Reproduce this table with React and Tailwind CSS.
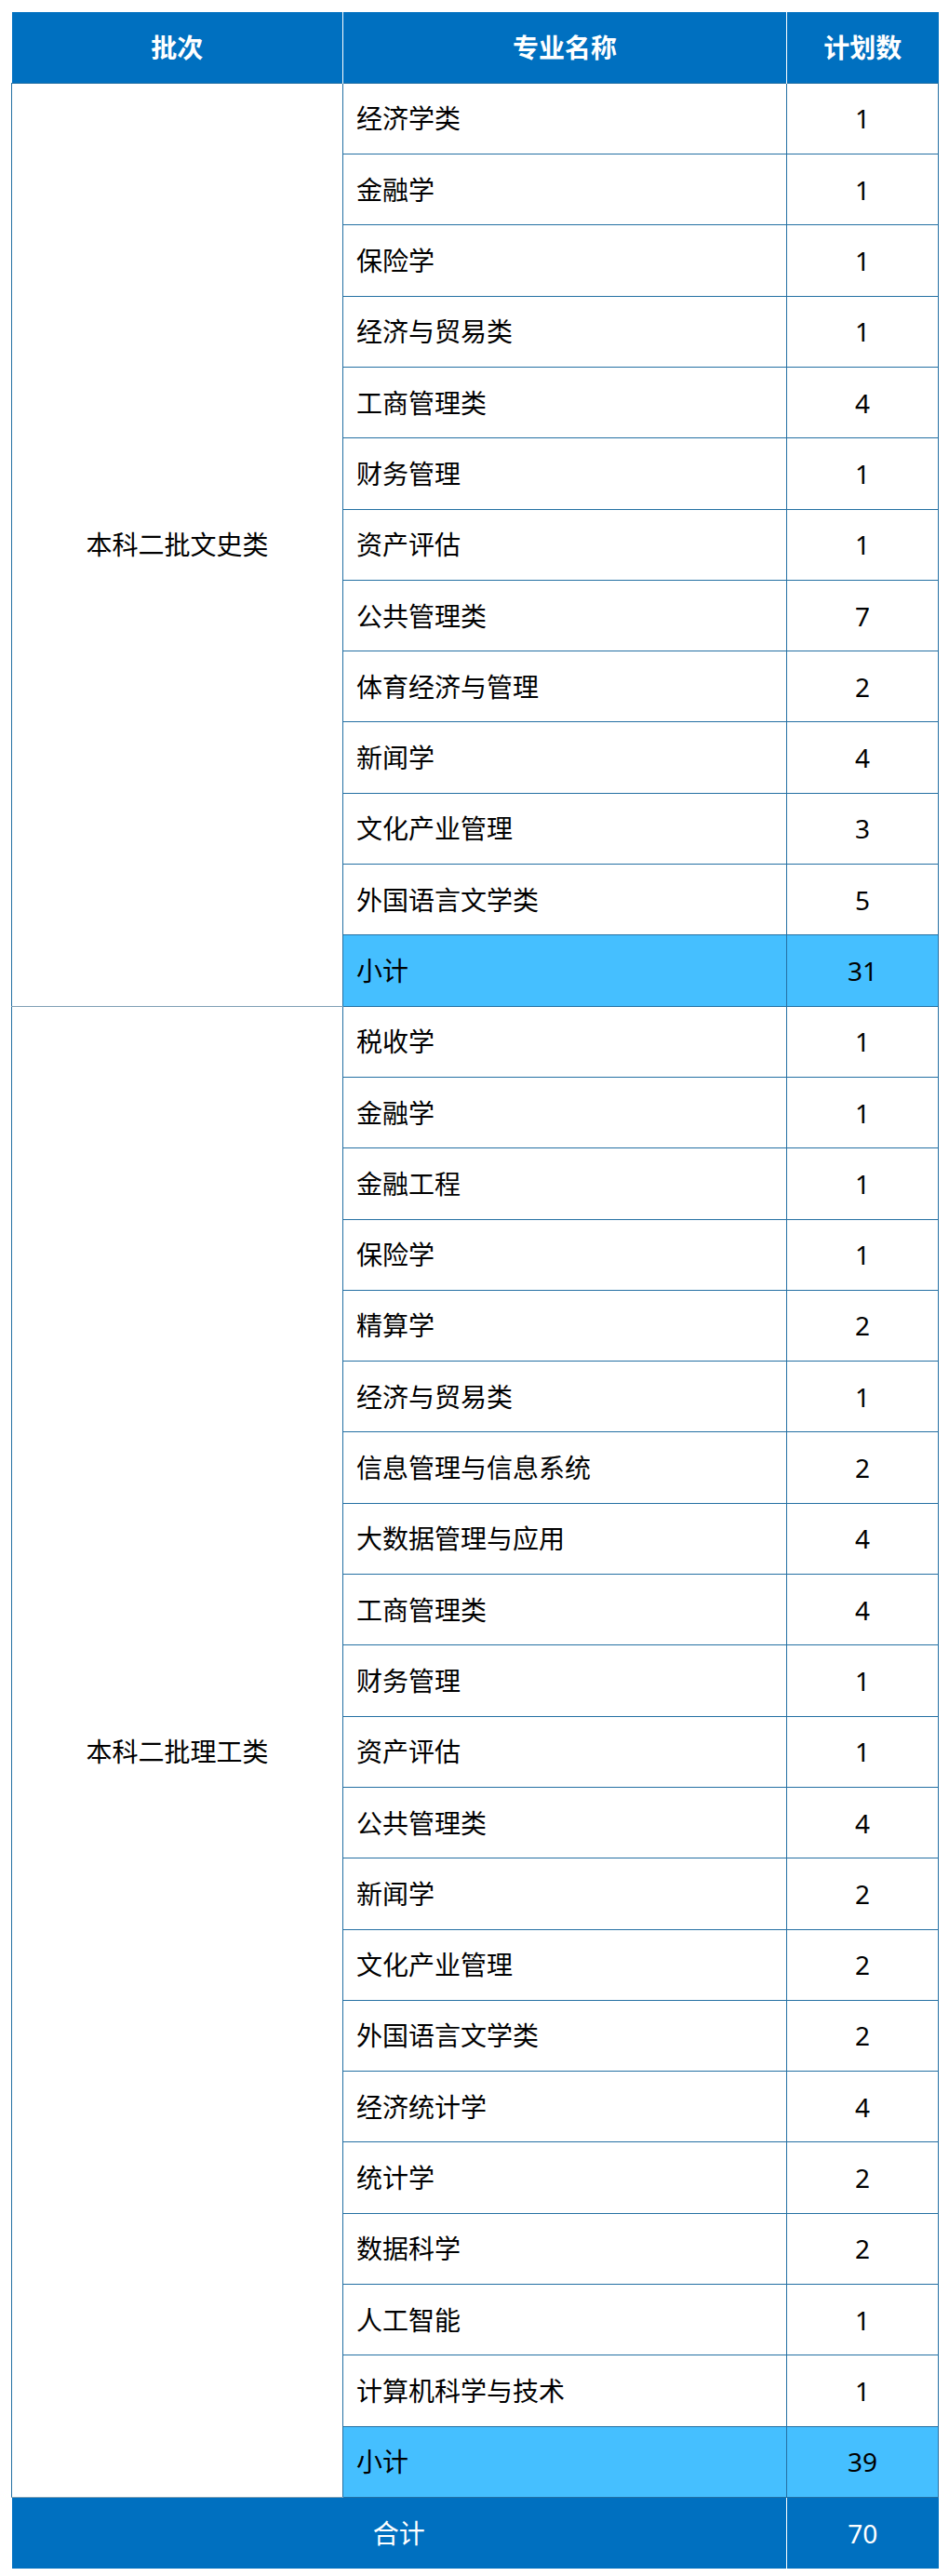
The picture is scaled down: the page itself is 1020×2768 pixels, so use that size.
import React from 'react';

const groups = [
    {
        name: '本科二批文史类',
        total: 31,
        items: [
            ['经济学类', 1],
            ['金融学', 1],
            ['保险学', 1],
            ['经济与贸易类', 1],
            ['工商管理类', 4],
            ['财务管理', 1],
            ['资产评估', 1],
            ['公共管理类', 7],
            ['体育经济与管理', 2],
            ['新闻学', 4],
            ['文化产业管理', 3],
            ['外国语言文学类', 5],
        ],
    },
    {
        name: '本科二批理工类',
        total: 39,
        items: [
            ['税收学', 1],
            ['金融学', 1],
            ['金融工程', 1],
            ['保险学', 1],
            ['精算学', 2],
            ['经济与贸易类', 1],
            ['信息管理与信息系统', 2],
            ['大数据管理与应用', 4],
            ['工商管理类', 4],
            ['财务管理', 1],
            ['资产评估', 1],
            ['公共管理类', 4],
            ['新闻学', 2],
            ['文化产业管理', 2],
            ['外国语言文学类', 2],
            ['经济统计学', 4],
            ['统计学', 2],
            ['数据科学', 2],
            ['人工智能', 1],
            ['计算机科学与技术', 1],
        ],
    },
];

const cell = 'border border-[#2470a3] h-[76.3px] p-0';

export default function App() {
    return (
        <div className="bg-white pt-[13px] pb-[10px] px-[12px] font-['Noto_Sans','Noto_Sans_CJK_SC',sans-serif] text-[28px] leading-none text-black">
            <table className="w-[996px] table-fixed border-collapse">
                <colgroup>
                    <col className="w-[356px]" />
                    <col className="w-[477px]" />
                    <col className="w-[163px]" />
                </colgroup>
                <thead>
                    <tr className="bg-[#0070c0] text-white font-bold">
                        <td className="h-[76.3px] text-center border-r border-white">批次</td>
                        <td className="h-[76.3px] text-center border-r border-white">专业名称</td>
                        <td className="h-[76.3px] text-center">计划数</td>
                    </tr>
                </thead>
                <tbody>
                    {groups.map((group, gi) => (
                        <React.Fragment key={gi}>
                            {group.items.map(([major, count], index) => (
                                <tr key={index}>
                                    {index === 0 && (
                                        <td rowSpan={group.items.length + 1} className={`${cell} text-center border-b-[#7f9fb5]`}>
                                            {group.name}
                                        </td>
                                    )}
                                    <td className={`${cell} pl-[14px]`}>{major}</td>
                                    <td className={`${cell} text-center`}>{count}</td>
                                </tr>
                            ))}
                            <tr className="bg-[#45bfff]">
                                <td className={`${cell} pl-[14px]`}>小计</td>
                                <td className={`${cell} text-center`}>{group.total}</td>
                            </tr>
                        </React.Fragment>
                    ))}
                    <tr className="bg-[#0070c0] text-white">
                        <td colSpan={2} className="h-[76.3px] text-center border-r border-white">
                            合计
                        </td>
                        <td className="h-[76.3px] text-center">70</td>
                    </tr>
                </tbody>
            </table>
        </div>
    );
}
